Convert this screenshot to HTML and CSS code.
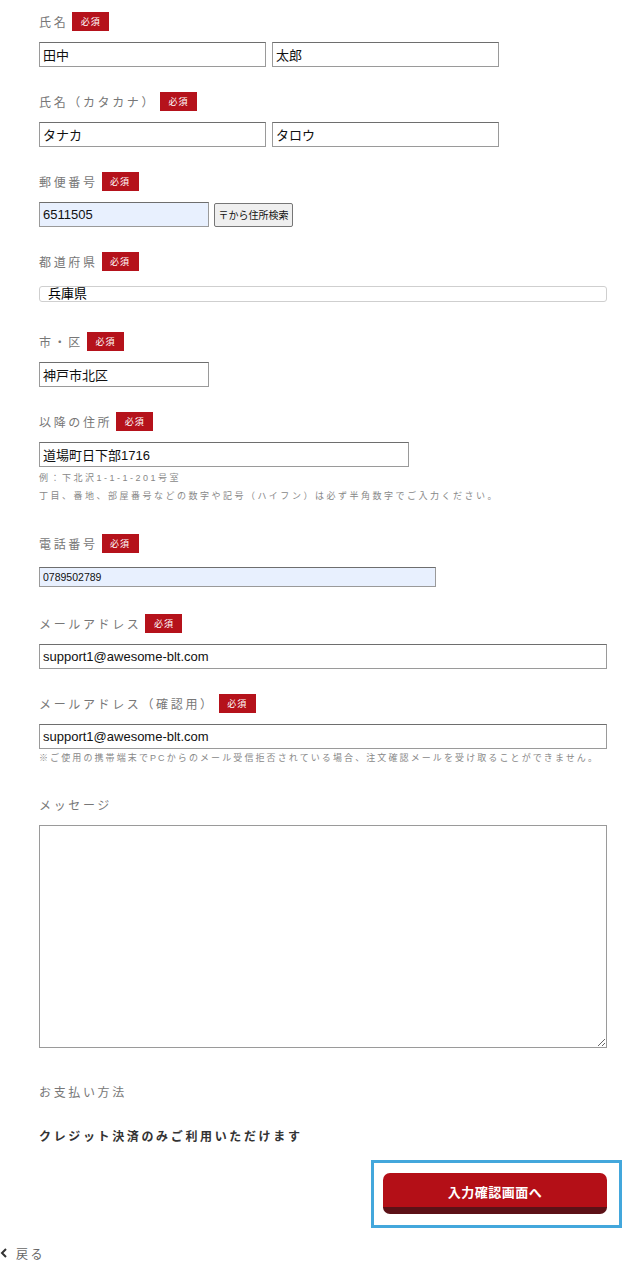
FILE: index.html
```html
<!DOCTYPE html>
<html lang="ja">
<head>
    <meta charset="UTF-8">
    <meta name="viewport" content="width=device-width, initial-scale=1.0">
    <title>お客様情報の入力</title>
    <link rel="stylesheet" href="styles.css">
</head>
<body>
    <form class="order-form" onsubmit="return false;">
        <div class="field">
            <div class="field-label">氏名<span class="badge">必須</span></div>
            <div class="input-pair">
                <input type="text" class="input input-half" value="田中">
                <input type="text" class="input input-half" value="太郎">
            </div>
        </div>

        <div class="field">
            <div class="field-label">氏名（カタカナ）<span class="badge">必須</span></div>
            <div class="input-pair">
                <input type="text" class="input input-half" value="タナカ">
                <input type="text" class="input input-half" value="タロウ">
            </div>
        </div>

        <div class="field">
            <div class="field-label">郵便番号<span class="badge">必須</span></div>
            <div class="input-pair">
                <input type="text" class="input input-short autofilled" value="6511505">
                <button type="button" class="zip-btn">〒から住所検索</button>
            </div>
        </div>

        <div class="field field-select">
            <div class="field-label">都道府県<span class="badge">必須</span></div>
            <select class="pref-select">
                <option>兵庫県</option>
            </select>
        </div>

        <div class="field">
            <div class="field-label">市・区<span class="badge">必須</span></div>
            <input type="text" class="input input-short" value="神戸市北区">
        </div>

        <div class="field field-address">
            <div class="field-label">以降の住所<span class="badge">必須</span></div>
            <input type="text" class="input input-address" value="道場町日下部1716">
            <p class="note note-lines">例：下北沢1-1-1-201号室<br>丁目、番地、部屋番号などの数字や記号（ハイフン）は必ず半角数字でご入力ください。</p>
        </div>

        <div class="field field-tel">
            <div class="field-label">電話番号<span class="badge">必須</span></div>
            <input type="tel" class="input input-tel autofilled" value="0789502789">
        </div>

        <div class="field">
            <div class="field-label">メールアドレス<span class="badge">必須</span></div>
            <input type="email" class="input input-full" value="support1@awesome-blt.com">
        </div>

        <div class="field field-confirm">
            <div class="field-label">メールアドレス（確認用）<span class="badge">必須</span></div>
            <input type="email" class="input input-full" value="support1@awesome-blt.com">
            <p class="note note-single">※ご使用の携帯端末でPCからのメール受信拒否されている場合、注文確認メールを受け取ることができません。</p>
        </div>

        <div class="field field-message">
            <div class="field-label">メッセージ</div>
            <textarea class="message-box"></textarea>
        </div>

        <div class="payment">
            <div class="field-label">お支払い方法</div>
            <p class="payment-text">クレジット決済のみご利用いただけます</p>
        </div>

        <div class="submit-row">
            <div class="submit-ring">
                <button type="submit" class="submit-btn">入力確認画面へ</button>
            </div>
        </div>
    </form>

    <a href="#" class="back-link">
        <svg class="back-icon" width="8" height="10" viewBox="0 0 8 10"><polyline points="6,1 2,5 6,9" fill="none" stroke="#333" stroke-width="2"/></svg>
        戻る
    </a>
</body>
</html>
```

FILE: styles.css
```css
* {
    margin: 0;
    padding: 0;
    box-sizing: border-box;
}

body {
    background-color: #fff;
    font-family: 'Liberation Sans', 'Noto Sans CJK JP', sans-serif;
    color: #222;
    width: 640px;
}

.order-form {
    padding: 12px 33px 0 39px;
}

.field {
    margin-bottom: 25px;
}

.field-label {
    display: flex;
    align-items: center;
    height: 19px;
    margin-bottom: 11px;
    font-size: 12px;
    letter-spacing: 0.22em;
    color: #777;
}

.badge {
    display: inline-flex;
    align-items: center;
    justify-content: center;
    width: 37px;
    height: 19px;
    margin-left: 4px;
    background-color: #b5121b;
    color: #fff;
    font-size: 9px;
    letter-spacing: 1px;
}

.input-pair {
    display: flex;
    align-items: center;
    gap: 6px;
}

.input {
    display: block;
    height: 25px;
    padding: 0 3px;
    border: 1px solid #9a9a9a;
    border-top-color: #6e6e6e;
    font-family: 'Liberation Sans', 'Noto Sans CJK JP', sans-serif;
    font-size: 13px;
    color: #111;
    background-color: #fff;
}

.input-half {
    width: 227px;
}

.input-short {
    width: 170px;
}

.input-address {
    width: 370px;
}

.input-full {
    width: 568px;
}

.autofilled {
    background-color: #e8f0fe;
}

.zip-btn {
    width: 79px;
    height: 24px;
    margin-left: -1px;
    border: 1px solid #767676;
    border-radius: 2px;
    background-color: #efefef;
    font-family: 'Noto Sans CJK JP', sans-serif;
    font-size: 10px;
    color: #111;
}

/* select has its own spacing */
.field-select .field-label {
    margin-bottom: 15px;
}

.field-select {
    margin-bottom: 30px;
}

.pref-select {
    display: block;
    width: 568px;
    height: 16px;
    padding: 0 8px;
    border: 1px solid #cfcfcf;
    border-radius: 3px;
    background-color: #fff;
    -webkit-appearance: none;
    appearance: none;
    font-family: 'Liberation Sans', 'Noto Sans CJK JP', sans-serif;
    font-size: 13px;
    line-height: 14px;
    color: #000;
}

.note {
    margin-top: 2px;
    font-size: 9px;
    line-height: 14px;
    letter-spacing: 2.5px;
    color: #888;
}

.note-lines {
    line-height: 18px;
}

.note-single {
    letter-spacing: 2.1px;
    white-space: nowrap;
}

.field-address {
    margin-bottom: 29px;
}

.field-tel .field-label {
    margin-bottom: 14px;
}

.field-tel {
    margin-bottom: 27px;
}

.input-tel {
    width: 397px;
    height: 20px;
    font-size: 10.5px;
}

.field-confirm {
    margin-bottom: 30px;
}

.message-box {
    display: block;
    width: 568px;
    height: 223px;
    border: 1px solid #9a9a9a;
    resize: both;
}

.field-message {
    margin-bottom: 34px;
}

.payment .field-label {
    margin-bottom: 27px;
}

.payment-text {
    font-size: 12px;
    font-weight: bold;
    line-height: 19px;
    letter-spacing: 0.22em;
    color: #333;
}

.submit-row {
    display: flex;
    justify-content: flex-end;
    margin-top: 13px;
    margin-right: -15px;
}

.submit-ring {
    padding: 10px 12px 11px 9px;
    border: 3px solid #43a7dc;
}

.submit-btn {
    display: block;
    width: 224px;
    height: 41px;
    padding-top: 2px;
    border: none;
    border-bottom: 7px solid #5c1117;
    border-radius: 7px;
    background-color: #b40f17;
    color: #fff;
    font-family: 'Noto Sans CJK JP', sans-serif;
    font-size: 13px;
    font-weight: bold;
    letter-spacing: 0.5px;
    cursor: pointer;
}

.back-link {
    display: flex;
    align-items: center;
    gap: 8px;
    margin-top: 16px;
    height: 18px;
    font-size: 12px;
    letter-spacing: 0.2em;
    color: #666;
    text-decoration: none;
}

.back-icon {
    display: block;
}
```
